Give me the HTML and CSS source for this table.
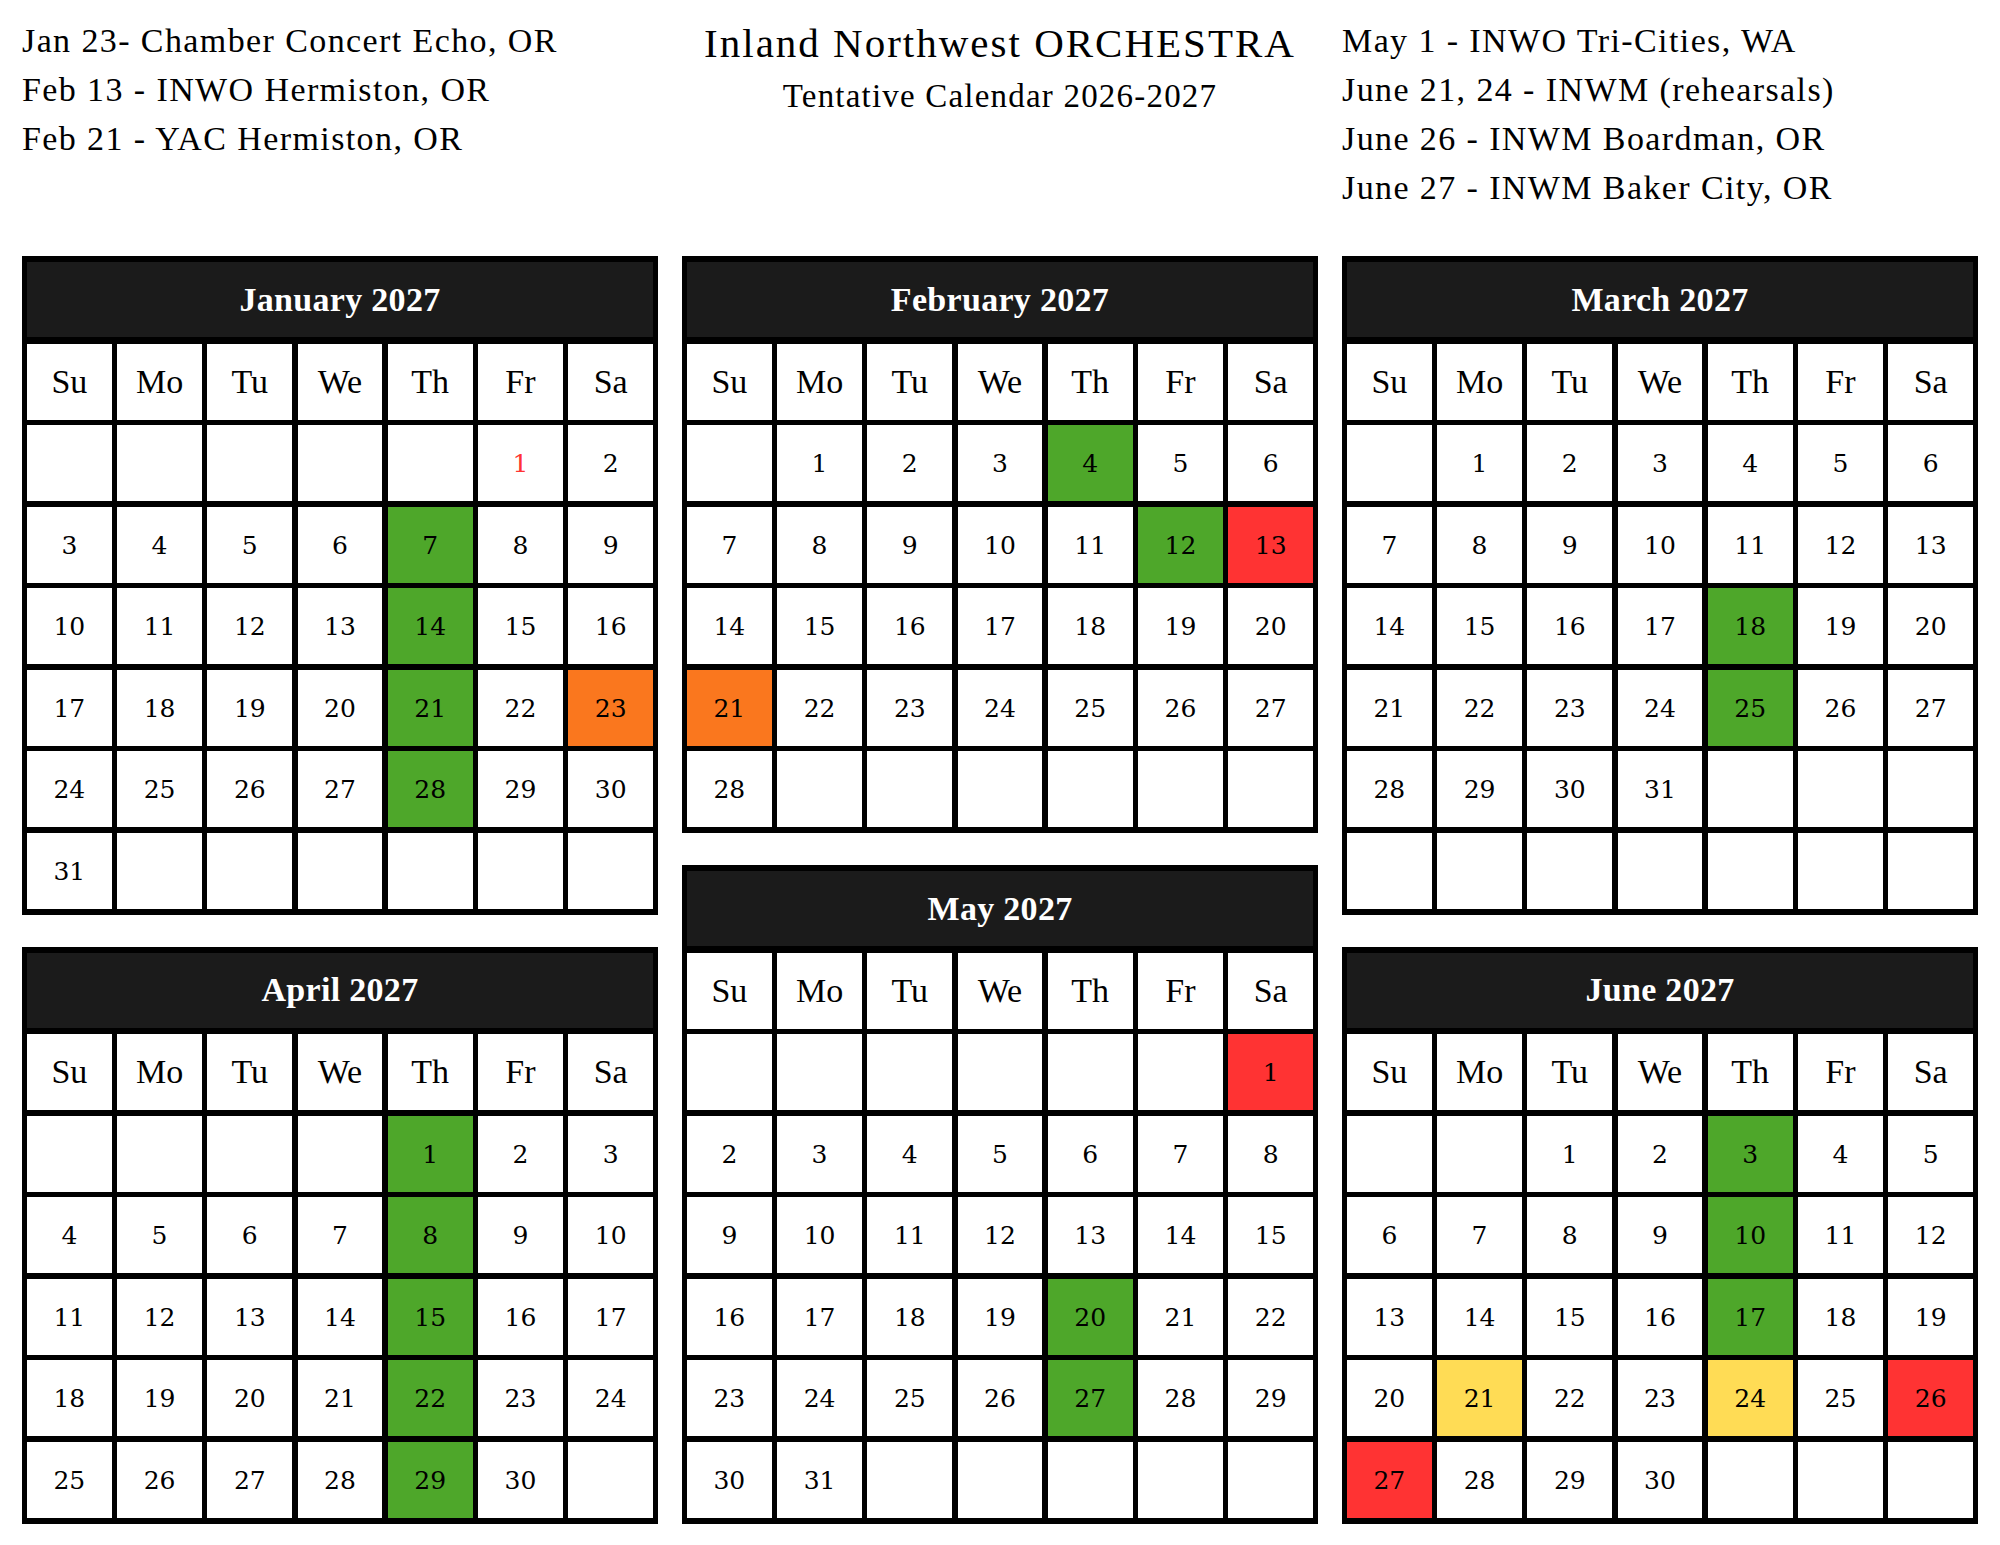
FILE: index.html
```html
<!DOCTYPE html>
<html lang="en">
<head>
<meta charset="utf-8">
<title>Inland Northwest Orchestra – Tentative Calendar 2026-2027</title>
<link rel="stylesheet" href="styles.css">
</head>
<body>
<div class="page">
  <header class="top">
    <div class="events">
      <p>Jan 23- Chamber Concert Echo, OR</p>
      <p>Feb 13 - INWO Hermiston, OR</p>
      <p>Feb 21 - YAC Hermiston, OR</p>
    </div>
    <div class="title">
      <h1>Inland Northwest ORCHESTRA</h1>
      <h2>Tentative Calendar 2026-2027</h2>
    </div>
    <div class="events">
      <p>May 1 - INWO Tri-Cities, WA</p>
      <p>June 21, 24 - INWM (rehearsals)</p>
      <p>June 26 - INWM Boardman, OR</p>
      <p>June 27 - INWM Baker City, OR</p>
    </div>
  </header>

  <main class="cals">
    <div class="col">
      <section class="cal">
        <div class="month">January 2027</div>
        <div class="wd">Su</div><div class="wd">Mo</div><div class="wd">Tu</div><div class="wd">We</div><div class="wd">Th</div><div class="wd">Fr</div><div class="wd">Sa</div>
        <div class="d"></div><div class="d"></div><div class="d"></div><div class="d"></div><div class="d"></div><div class="d red-text">1</div><div class="d">2</div>
        <div class="d">3</div><div class="d">4</div><div class="d">5</div><div class="d">6</div><div class="d green">7</div><div class="d">8</div><div class="d">9</div>
        <div class="d">10</div><div class="d">11</div><div class="d">12</div><div class="d">13</div><div class="d green">14</div><div class="d">15</div><div class="d">16</div>
        <div class="d">17</div><div class="d">18</div><div class="d">19</div><div class="d">20</div><div class="d green">21</div><div class="d">22</div><div class="d orange">23</div>
        <div class="d">24</div><div class="d">25</div><div class="d">26</div><div class="d">27</div><div class="d green">28</div><div class="d">29</div><div class="d">30</div>
        <div class="d">31</div><div class="d"></div><div class="d"></div><div class="d"></div><div class="d"></div><div class="d"></div><div class="d"></div>
      </section>
      <section class="cal">
        <div class="month">April 2027</div>
        <div class="wd">Su</div><div class="wd">Mo</div><div class="wd">Tu</div><div class="wd">We</div><div class="wd">Th</div><div class="wd">Fr</div><div class="wd">Sa</div>
        <div class="d"></div><div class="d"></div><div class="d"></div><div class="d"></div><div class="d green">1</div><div class="d">2</div><div class="d">3</div>
        <div class="d">4</div><div class="d">5</div><div class="d">6</div><div class="d">7</div><div class="d green">8</div><div class="d">9</div><div class="d">10</div>
        <div class="d">11</div><div class="d">12</div><div class="d">13</div><div class="d">14</div><div class="d green">15</div><div class="d">16</div><div class="d">17</div>
        <div class="d">18</div><div class="d">19</div><div class="d">20</div><div class="d">21</div><div class="d green">22</div><div class="d">23</div><div class="d">24</div>
        <div class="d">25</div><div class="d">26</div><div class="d">27</div><div class="d">28</div><div class="d green">29</div><div class="d">30</div><div class="d"></div>
      </section>
    </div>

    <div class="col">
      <section class="cal">
        <div class="month">February 2027</div>
        <div class="wd">Su</div><div class="wd">Mo</div><div class="wd">Tu</div><div class="wd">We</div><div class="wd">Th</div><div class="wd">Fr</div><div class="wd">Sa</div>
        <div class="d"></div><div class="d">1</div><div class="d">2</div><div class="d">3</div><div class="d green">4</div><div class="d">5</div><div class="d">6</div>
        <div class="d">7</div><div class="d">8</div><div class="d">9</div><div class="d">10</div><div class="d">11</div><div class="d green">12</div><div class="d red">13</div>
        <div class="d">14</div><div class="d">15</div><div class="d">16</div><div class="d">17</div><div class="d">18</div><div class="d">19</div><div class="d">20</div>
        <div class="d orange">21</div><div class="d">22</div><div class="d">23</div><div class="d">24</div><div class="d">25</div><div class="d">26</div><div class="d">27</div>
        <div class="d">28</div><div class="d"></div><div class="d"></div><div class="d"></div><div class="d"></div><div class="d"></div><div class="d"></div>
      </section>
      <section class="cal">
        <div class="month">May 2027</div>
        <div class="wd">Su</div><div class="wd">Mo</div><div class="wd">Tu</div><div class="wd">We</div><div class="wd">Th</div><div class="wd">Fr</div><div class="wd">Sa</div>
        <div class="d"></div><div class="d"></div><div class="d"></div><div class="d"></div><div class="d"></div><div class="d"></div><div class="d red">1</div>
        <div class="d">2</div><div class="d">3</div><div class="d">4</div><div class="d">5</div><div class="d">6</div><div class="d">7</div><div class="d">8</div>
        <div class="d">9</div><div class="d">10</div><div class="d">11</div><div class="d">12</div><div class="d">13</div><div class="d">14</div><div class="d">15</div>
        <div class="d">16</div><div class="d">17</div><div class="d">18</div><div class="d">19</div><div class="d green">20</div><div class="d">21</div><div class="d">22</div>
        <div class="d">23</div><div class="d">24</div><div class="d">25</div><div class="d">26</div><div class="d green">27</div><div class="d">28</div><div class="d">29</div>
        <div class="d">30</div><div class="d">31</div><div class="d"></div><div class="d"></div><div class="d"></div><div class="d"></div><div class="d"></div>
      </section>
    </div>

    <div class="col">
      <section class="cal">
        <div class="month">March 2027</div>
        <div class="wd">Su</div><div class="wd">Mo</div><div class="wd">Tu</div><div class="wd">We</div><div class="wd">Th</div><div class="wd">Fr</div><div class="wd">Sa</div>
        <div class="d"></div><div class="d">1</div><div class="d">2</div><div class="d">3</div><div class="d">4</div><div class="d">5</div><div class="d">6</div>
        <div class="d">7</div><div class="d">8</div><div class="d">9</div><div class="d">10</div><div class="d">11</div><div class="d">12</div><div class="d">13</div>
        <div class="d">14</div><div class="d">15</div><div class="d">16</div><div class="d">17</div><div class="d green">18</div><div class="d">19</div><div class="d">20</div>
        <div class="d">21</div><div class="d">22</div><div class="d">23</div><div class="d">24</div><div class="d green">25</div><div class="d">26</div><div class="d">27</div>
        <div class="d">28</div><div class="d">29</div><div class="d">30</div><div class="d">31</div><div class="d"></div><div class="d"></div><div class="d"></div>
        <div class="d"></div><div class="d"></div><div class="d"></div><div class="d"></div><div class="d"></div><div class="d"></div><div class="d"></div>
      </section>
      <section class="cal">
        <div class="month">June 2027</div>
        <div class="wd">Su</div><div class="wd">Mo</div><div class="wd">Tu</div><div class="wd">We</div><div class="wd">Th</div><div class="wd">Fr</div><div class="wd">Sa</div>
        <div class="d"></div><div class="d"></div><div class="d">1</div><div class="d">2</div><div class="d green">3</div><div class="d">4</div><div class="d">5</div>
        <div class="d">6</div><div class="d">7</div><div class="d">8</div><div class="d">9</div><div class="d green">10</div><div class="d">11</div><div class="d">12</div>
        <div class="d">13</div><div class="d">14</div><div class="d">15</div><div class="d">16</div><div class="d green">17</div><div class="d">18</div><div class="d">19</div>
        <div class="d">20</div><div class="d yellow">21</div><div class="d">22</div><div class="d">23</div><div class="d yellow">24</div><div class="d">25</div><div class="d red">26</div>
        <div class="d red">27</div><div class="d">28</div><div class="d">29</div><div class="d">30</div><div class="d"></div><div class="d"></div><div class="d"></div>
      </section>
    </div>
  </main>
</div>
</body>
</html>
```
FILE: styles.css
```css
html, body {
  margin: 0;
  padding: 0;
  background: #ffffff;
}

body {
  font-family: "Liberation Serif", "Times New Roman", serif;
  color: #000;
}

.page {
  width: 1956px;
  padding: 0 22px;
}

.top {
  display: grid;
  grid-template-columns: 636px 636px 636px;
  column-gap: 24px;
  height: 256px;
}

.events {
  padding-top: 16px;
}

.events p {
  margin: 0;
  font-size: 34px;
  line-height: 49px;
  letter-spacing: 1.4px;
  white-space: nowrap;
}

.title {
  text-align: center;
  padding-top: 18px;
}

.title h1 {
  margin: 0;
  font-weight: normal;
  font-size: 41px;
  line-height: 50px;
  letter-spacing: 2px;
  white-space: nowrap;
}

.title h2 {
  margin: 3px 0 0;
  font-weight: normal;
  font-size: 33px;
  line-height: 50px;
  letter-spacing: 1.2px;
  white-space: nowrap;
}

.cals {
  display: grid;
  grid-template-columns: 636px 636px 636px;
  column-gap: 24px;
}

.col {
  display: flex;
  flex-direction: column;
  gap: 32px;
}

.cal {
  display: grid;
  grid-template-columns: repeat(7, 1fr);
  grid-auto-rows: 76px;
  gap: 5.5px;
  padding: 6px 5px;
  background: #000;
}

.month {
  grid-column: 1 / -1;
  background: #1b1b1b;
  color: #fff;
  font-weight: bold;
  font-size: 34px;
  letter-spacing: 0.3px;
  display: flex;
  align-items: center;
  justify-content: center;
  margin-bottom: 1px;
}

.wd,
.d {
  background: #fff;
  display: flex;
  align-items: center;
  justify-content: center;
}

.wd {
  font-size: 34px;
}

.d {
  font-family: "DejaVu Serif", "Liberation Serif", serif;
  font-size: 25px;
  padding-top: 1px;
}

.green { background: #4ea72a; }
.orange { background: #fa771e; }
.red { background: #ff3333; }
.yellow { background: #ffdc55; }
.red-text { color: #ff3333; }
```
